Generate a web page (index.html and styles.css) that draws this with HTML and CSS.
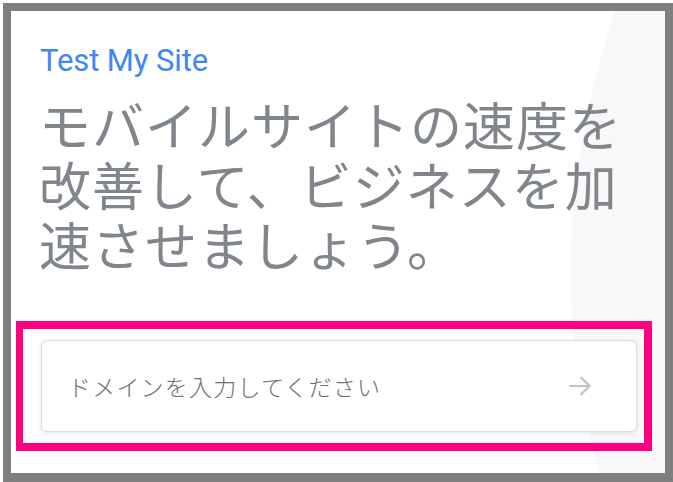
FILE: index.html
```html
<!DOCTYPE html>
<html lang="ja">
<head>
<meta charset="utf-8">
<title>Test My Site</title>
<link rel="stylesheet" href="styles.css">
</head>
<body>
<div class="frame">
  <div class="page">
    <svg class="bg-shape" width="654" height="462" viewBox="0 0 654 462" aria-hidden="true">
      <path d="M604 0 C559 139 539 289 589 462 L654 462 L654 0 Z" fill="#f8f8f9"/>
    </svg>
    <div class="title">Test My Site</div>
    <h1 class="headline">モバイルサイトの速度を<br>改善して、ビジネスを加<br>速させましょう。</h1>
    <div class="annot">
      <div class="field">
        <span class="placeholder">ドメインを入力してください</span>
        <svg class="arrow" width="24" height="22" viewBox="0 0 24 22" aria-hidden="true">
          <path d="M1.5 11 H21.5 M12.5 2 L21.5 11 L12.5 20" fill="none" stroke="#c2c2c2" stroke-width="2.2"/>
        </svg>
      </div>
    </div>
  </div>
</div>
</body>
</html>
```

FILE: styles.css
```css
html, body {
  margin: 0;
  padding: 0;
  background: #ffffff;
}

.frame {
  margin: 3px 0 0 3px;
  width: 670px;
  height: 479px;
  box-sizing: border-box;
  border: 8px solid #7f7f7f;
  border-bottom-width: 9px;
}

.page {
  position: relative;
  height: 100%;
  background: #ffffff;
  display: flex;
  flex-direction: column;
  overflow: hidden;
}

.bg-shape {
  position: absolute;
  left: 0;
  top: 0;
}

.title {
  position: relative;
  margin: 31px 0 0 29px;
  font-family: Roboto, "Noto Sans", sans-serif;
  font-size: 31px;
  line-height: 37px;
  color: #4285f4;
  letter-spacing: -0.1px;
}

.headline {
  position: relative;
  margin: 15px 0 0 28px;
  font-family: "Noto Sans CJK JP", "Noto Sans", sans-serif;
  font-weight: 400;
  font-size: 52px;
  line-height: 60px;
  color: #80868b;
  letter-spacing: 1px;
}

.annot {
  position: relative;
  margin: auto 13px 22px 5px;
  border: 8px solid #ff0080;
  border-left-width: 7px;
  padding: 11px 7px 11px 18px;
}

.field {
  height: 90px;
  border: 1px solid #dadce0;
  border-radius: 6px;
  background: #ffffff;
  box-shadow: 0 1px 4px rgba(60, 64, 67, 0.14);
  display: flex;
  align-items: center;
  padding: 0 44px 0 26px;
}

.placeholder {
  flex: 1;
  font-family: "Noto Sans CJK JP", sans-serif;
  font-size: 23px;
  letter-spacing: 1.2px;
  color: #707070;
  font-weight: 300;
}

.arrow {
  display: block;
}
```
